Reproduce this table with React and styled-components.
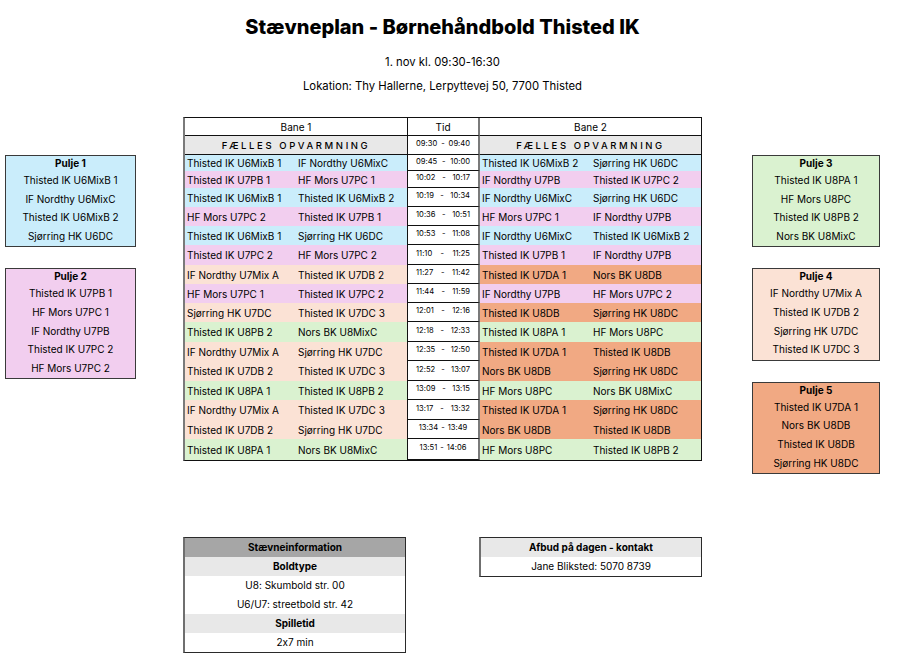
import styled, { createGlobalStyle } from 'styled-components'

const GlobalStyle = createGlobalStyle`
body {
    margin: 0;
    background: #fff;
    color: #000;
    font-family: Inter, "Open Sans", sans-serif;
    font-feature-settings: "calt" 0;
}
`
const COLORS = {
    blue: '#caedfb',
    pink: '#f2ceef',
    peach: '#fbe2d5',
    green: '#daf2d0',
    orange: '#f1a983',
    grey: '#e8e8e8',
    dark: '#a6a6a6',
}

const Page = styled.div`
width: 897px;
padding: 0 0 0 5px;
box-sizing: border-box;
display: grid;
grid-template-columns: 131px 47px 519px 50px 128px;
align-items: start;
`
const Header = styled.header`
grid-column: 3;
grid-row: 1;
display: flex;
flex-direction: column;
align-items: center;
padding: 15px 0 19px;
& h1 {
    margin: 0;
    font-size: 20px;
    font-weight: 800;
    line-height: 24px;
    white-space: nowrap;
}
& p {
    margin: 0;
    font-size: 11.3px;
    line-height: 24px;
    white-space: nowrap;
}
& p:first-of-type {
    margin-top: 11px;
}
`
const PoolCol = styled.div`
grid-column: ${props => props.$col};
grid-row: 2;
display: flex;
flex-direction: column;
gap: 21px;
padding-top: 38px;
`
const Pool = styled.div`
background: ${props => COLORS[props.$color]};
border: 1px solid #3a3a3a;
text-align: center;
font-size: 10px;
padding-bottom: 1px;
& h4 {
    margin: 0;
    font-size: 10px;
    font-weight: 700;
    line-height: 15px;
}
& div {
    line-height: 18.6px;
}
`
const Center = styled.div`
grid-column: 3;
grid-row: 2;
display: flex;
flex-direction: column;
gap: 76px;
`
const Table = styled.div`
border: 1px solid #111;
border-left: 2px solid #7a7a7a;
font-size: 10px;
`
const Row = styled.div`
display: grid;
grid-template-columns: 222px 73px 1fr;
height: ${props => props.$h}px;
`
const HeadCell = styled.div`
display: flex;
align-items: center;
justify-content: center;
background: ${props => props.$bg || '#fff'};
border-bottom: 1px solid #111;
letter-spacing: ${props => props.$spaced ? '2.6px' : '0'};
font-weight: ${props => props.$spaced ? 500 : 400};
font-size: ${props => props.$spaced ? '9.5px' : '10px'};
`
const TidHead = styled(HeadCell)`
border-left: 1px solid #111;
border-right: 2px solid #7a7a7a;
`
const Lane = styled.div`
display: grid;
grid-template-columns: 111px 1fr;
align-items: center;
padding-left: 2px;
background: ${props => COLORS[props.$color]};
white-space: nowrap;
`
const TimeCell = styled.div`
display: flex;
align-items: center;
justify-content: ${props => props.$tight ? 'center' : 'space-between'};
gap: ${props => props.$tight ? '3px' : '0'};
padding: 0 8px 3px;
background: #fff;
border-left: 1px solid #111;
border-right: 2px solid #7a7a7a;
border-bottom: 1px solid #111;
font-size: 7.6px;
white-space: nowrap;
`
const Bottom = styled.div`
display: flex;
gap: 73px;
align-items: flex-start;
`
const InfoBox = styled.div`
width: 223px;
box-sizing: border-box;
border: 1px solid #2a2a2a;
border-left: 2px solid #6f6f6f;
font-size: 10px;
text-align: center;
`
const InfoRow = styled.div`
height: 19px;
line-height: 19px;
background: ${props => props.$bg ? COLORS[props.$bg] : '#fff'};
font-weight: ${props => props.$bold ? 700 : 400};
`

const rows = [
    { h: 16, t: ['09:45', '10:00'], a: ['blue', 'Thisted IK U6MixB 1', 'IF Nordthy U6MixC'], b: ['blue', 'Thisted IK U6MixB 2', 'Sjørring HK U6DC'] },
    { h: 17, t: ['10:02', '10:17'], a: ['pink', 'Thisted IK U7PB 1', 'HF Mors U7PC 1'], b: ['pink', 'IF Nordthy U7PB', 'Thisted IK U7PC 2'] },
    { h: 19, t: ['10:19', '10:34'], a: ['blue', 'Thisted IK U6MixB 1', 'Thisted IK U6MixB 2'], b: ['blue', 'IF Nordthy U6MixC', 'Sjørring HK U6DC'] },
    { h: 19, t: ['10:36', '10:51'], a: ['pink', 'HF Mors U7PC 2', 'Thisted IK U7PB 1'], b: ['pink', 'HF Mors U7PC 1', 'IF Nordthy U7PB'] },
    { h: 19, t: ['10:53', '11:08'], a: ['blue', 'Thisted IK U6MixB 1', 'Sjørring HK U6DC'], b: ['blue', 'IF Nordthy U6MixC', 'Thisted IK U6MixB 2'] },
    { h: 20, t: ['11:10', '11:25'], a: ['pink', 'Thisted IK U7PC 2', 'HF Mors U7PC 2'], b: ['pink', 'Thisted IK U7PB 1', 'IF Nordthy U7PB'] },
    { h: 19, t: ['11:27', '11:42'], a: ['peach', 'IF Nordthy U7Mix A', 'Thisted IK U7DB 2'], b: ['orange', 'Thisted IK U7DA 1', 'Nors BK U8DB'] },
    { h: 19, t: ['11:44', '11:59'], a: ['pink', 'HF Mors U7PC 1', 'Thisted IK U7PC 2'], b: ['pink', 'IF Nordthy U7PB', 'HF Mors U7PC 2'] },
    { h: 19, t: ['12:01', '12:16'], a: ['peach', 'Sjørring HK U7DC', 'Thisted IK U7DC 3'], b: ['orange', 'Thisted IK U8DB', 'Sjørring HK U8DC'] },
    { h: 20, t: ['12:18', '12:33'], a: ['green', 'Thisted IK U8PB 2', 'Nors BK U8MixC'], b: ['green', 'Thisted IK U8PA 1', 'HF Mors U8PC'] },
    { h: 19, t: ['12:35', '12:50'], a: ['peach', 'IF Nordthy U7Mix A', 'Sjørring HK U7DC'], b: ['orange', 'Thisted IK U7DA 1', 'Thisted IK U8DB'] },
    { h: 20, t: ['12:52', '13:07'], a: ['peach', 'Thisted IK U7DB 2', 'Thisted IK U7DC 3'], b: ['orange', 'Nors BK U8DB', 'Sjørring HK U8DC'] },
    { h: 19, t: ['13:09', '13:15'], a: ['green', 'Thisted IK U8PA 1', 'Thisted IK U8PB 2'], b: ['green', 'HF Mors U8PC', 'Nors BK U8MixC'] },
    { h: 20, t: ['13:17', '13:32'], a: ['peach', 'IF Nordthy U7Mix A', 'Thisted IK U7DC 3'], b: ['orange', 'Thisted IK U7DA 1', 'Sjørring HK U8DC'] },
    { h: 19, t: ['13:34', '13:49'], tight: true, a: ['peach', 'Thisted IK U7DB 2', 'Sjørring HK U7DC'], b: ['orange', 'Nors BK U8DB', 'Thisted IK U8DB'] },
    { h: 21, t: ['13:51', '14:06'], tight: true, a: ['green', 'Thisted IK U8PA 1', 'Nors BK U8MixC'], b: ['green', 'HF Mors U8PC', 'Thisted IK U8PB 2'] },
]

const leftPools = [
    { name: 'Pulje 1', color: 'blue', teams: ['Thisted IK U6MixB 1', 'IF Nordthy U6MixC', 'Thisted IK U6MixB 2', 'Sjørring HK U6DC'] },
    { name: 'Pulje 2', color: 'pink', teams: ['Thisted IK U7PB 1', 'HF Mors U7PC 1', 'IF Nordthy U7PB', 'Thisted IK U7PC 2', 'HF Mors U7PC 2'] },
]
const rightPools = [
    { name: 'Pulje 3', color: 'green', teams: ['Thisted IK U8PA 1', 'HF Mors U8PC', 'Thisted IK U8PB 2', 'Nors BK U8MixC'] },
    { name: 'Pulje 4', color: 'peach', teams: ['IF Nordthy U7Mix A', 'Thisted IK U7DB 2', 'Sjørring HK U7DC', 'Thisted IK U7DC 3'] },
    { name: 'Pulje 5', color: 'orange', teams: ['Thisted IK U7DA 1', 'Nors BK U8DB', 'Thisted IK U8DB', 'Sjørring HK U8DC'] },
]

function Pools({ col, pools }) {
    return (
        <PoolCol $col={col}>
            {pools.map(p => (
                <Pool key={p.name} $color={p.color}>
                    <h4>{p.name}</h4>
                    {p.teams.map(t => <div key={t}>{t}</div>)}
                </Pool>
            ))}
        </PoolCol>
    )
}

function Time({ t, tight }) {
    return <TimeCell $tight={tight}><span>{t[0]}</span><span>-</span><span>{t[1]}</span></TimeCell>
}

export default function App() {
    return (
        <Page>
            <GlobalStyle />
            <Header>
                <h1>Stævneplan - Børnehåndbold Thisted IK</h1>
                <p>1. nov kl. 09:30-16:30</p>
                <p>Lokation: Thy Hallerne, Lerpyttevej 50, 7700 Thisted</p>
            </Header>
            <Pools col={1} pools={leftPools} />
            <Center>
                <Table>
                    <Row $h={18}>
                        <HeadCell>Bane 1</HeadCell>
                        <TidHead>Tid</TidHead>
                        <HeadCell>Bane 2</HeadCell>
                    </Row>
                    <Row $h={19}>
                        <HeadCell $bg={COLORS.grey} $spaced>FÆLLES OPVARMNING</HeadCell>
                        <Time t={['09:30', '09:40']} />
                        <HeadCell $bg={COLORS.grey} $spaced>FÆLLES OPVARMNING</HeadCell>
                    </Row>
                    {rows.map(r => (
                        <Row key={r.t[0]} $h={r.h}>
                            <Lane $color={r.a[0]}><span>{r.a[1]}</span><span>{r.a[2]}</span></Lane>
                            <Time t={r.t} tight={r.tight} />
                            <Lane $color={r.b[0]}><span>{r.b[1]}</span><span>{r.b[2]}</span></Lane>
                        </Row>
                    ))}
                </Table>
                <Bottom>
                    <InfoBox>
                        <InfoRow $bg="dark" $bold>Stævneinformation</InfoRow>
                        <InfoRow $bg="grey" $bold>Boldtype</InfoRow>
                        <InfoRow>U8: Skumbold str. 00</InfoRow>
                        <InfoRow>U6/U7: streetbold str. 42</InfoRow>
                        <InfoRow $bg="grey" $bold>Spilletid</InfoRow>
                        <InfoRow>2x7 min</InfoRow>
                    </InfoBox>
                    <InfoBox>
                        <InfoRow $bg="grey" $bold>Afbud på dagen - kontakt</InfoRow>
                        <InfoRow>Jane Bliksted: 5070 8739</InfoRow>
                    </InfoBox>
                </Bottom>
            </Center>
            <Pools col={5} pools={rightPools} />
        </Page>
    )
}
